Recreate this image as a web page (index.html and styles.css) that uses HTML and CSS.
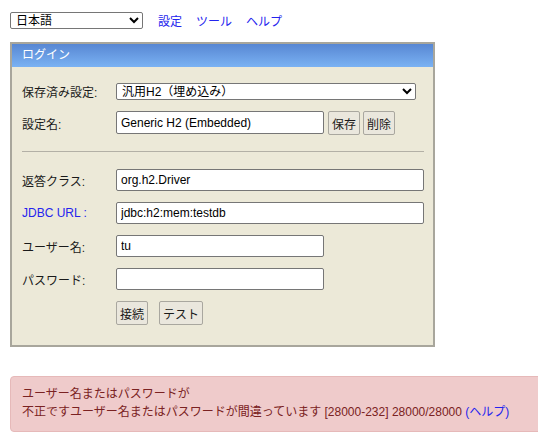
FILE: index.html
```html
<!DOCTYPE html>
<html lang="ja">
<head>
<meta charset="utf-8">
<link rel="stylesheet" href="styles.css">
</head>
<body>
<div class="page">
  <div class="topbar">
    <select class="lang"><option>日本語</option></select>
    <a class="toplink" href="#">設定</a>
    <a class="toplink" href="#">ツール</a>
    <a class="toplink" href="#">ヘルプ</a>
  </div>

  <div class="login">
    <div class="login-head">ログイン</div>
    <div class="login-body">
      <div class="row">
        <span class="label">保存済み設定:</span>
        <select class="saved"><option>汎用H2（埋め込み）</option></select>
      </div>
      <div class="row">
        <span class="label">設定名:</span>
        <div class="inline">
          <input class="field short" type="text" value="Generic H2 (Embedded)">
          <button class="btn">保存</button>
          <button class="btn">削除</button>
        </div>
      </div>
      <hr class="sep">
      <div class="row">
        <span class="label">返答クラス:</span>
        <input class="field long" type="text" value="org.h2.Driver">
      </div>
      <div class="row">
        <a class="label link" href="#">JDBC URL</a>
        <input class="field long" type="text" value="jdbc:h2:mem:testdb">
      </div>
      <div class="row">
        <span class="label">ユーザー名:</span>
        <input class="field short" type="text" value="tu">
      </div>
      <div class="row">
        <span class="label">パスワード:</span>
        <input class="field short" type="password" value="">
      </div>
      <div class="row">
        <span class="label"></span>
        <div class="actions">
          <button class="btn">接続</button>
          <button class="btn">テスト</button>
        </div>
      </div>
    </div>
  </div>

  <div class="error">ユーザー名またはパスワードが<br>不正ですユーザー名またはパスワードが間違っています [28000-232] 28000/28000 <a class="help" href="#">(ヘルプ)</a></div>
</div>
</body>
</html>
```

FILE: styles.css
```css
html, body {
  margin: 0;
  padding: 0;
  background: #ffffff;
}
body {
  font-family: "Liberation Sans", "Noto Sans CJK JP", Arial, sans-serif;
  font-size: 12px;
  color: #1a1a1a;
}
.page {
  box-sizing: border-box;
  padding: 12px 0 14px 10px;
  width: 538px;
  overflow: hidden;
}
.topbar {
  display: flex;
  align-items: center;
  height: 17px;
}
.lang {
  width: 133px;
  height: 17px;
  font-family: inherit;
  font-size: 12px;
  padding: 0 0 0 1px;
  margin: 0 15px 0 0;
  border: 1px solid #767676;
  border-radius: 2px;
  background: #fff;
  color: #000;
}
.toplink {
  color: #2424ee;
  text-decoration: none;
  margin-right: 14px;
  font-size: 12px;
}
.login {
  margin-top: 13px;
  width: 421px;
  border: 2px solid #a8a69c;
  background: #ece9d8;
}
.login-head {
  height: 23px;
  line-height: 23px;
  padding-left: 10px;
  color: #ffffff;
  background: linear-gradient(#5887d3, #7ab2f3);
}
.login-body {
  padding: 16px 9px 20px 10px;
  display: flex;
  flex-direction: column;
  gap: 11px;
}
.row {
  display: flex;
  align-items: center;
}
.label {
  width: 94px;
  flex: none;
  color: #1a1a1a;
}
.link {
  color: #2424ee;
  text-decoration: none;
}
.link::after {
  content: " :";
  color: #2424ee;
}
.saved {
  width: 300px;
  height: 17px;
  font-family: inherit;
  font-size: 12px;
  padding: 0 0 0 1px;
  margin: 0;
  border: 1px solid #767676;
  border-radius: 2px;
  background: #fff;
  color: #000;
}
.inline {
  display: flex;
  align-items: flex-start;
  gap: 3px;
}
.field {
  box-sizing: border-box;
  height: 22px;
  margin: 0;
  padding: 0 4px;
  font-family: inherit;
  font-size: 12px;
  color: #000;
  border: 1px solid #767676;
  border-radius: 2px;
  background: #fff;
}
.inline .field {
  height: 23px;
  margin-right: 1px;
}
.short { width: 208px; }
.long { width: 308px; }
.btn {
  box-sizing: border-box;
  height: 24px;
  padding: 0 3px;
  margin: 0;
  font-family: inherit;
  font-size: 12px;
  color: #1a1a1a;
  background: #eae7dd;
  border: 1px solid #a9a79f;
  border-radius: 2px;
}
.actions {
  display: flex;
  gap: 11px;
}
.sep {
  margin: 5px 0 6px 0;
  border: 0;
  border-top: 1px solid #b3b0a6;
  height: 0;
}
.error {
  margin-top: 29px;
  width: 560px;
  padding: 8px 11px 10px;
  line-height: 18px;
  color: #7a2222;
  background: #efcbcb;
  border: 1px solid #e6b9b9;
  border-radius: 4px;
}
.help {
  color: #2424ee;
  text-decoration: none;
}
```
